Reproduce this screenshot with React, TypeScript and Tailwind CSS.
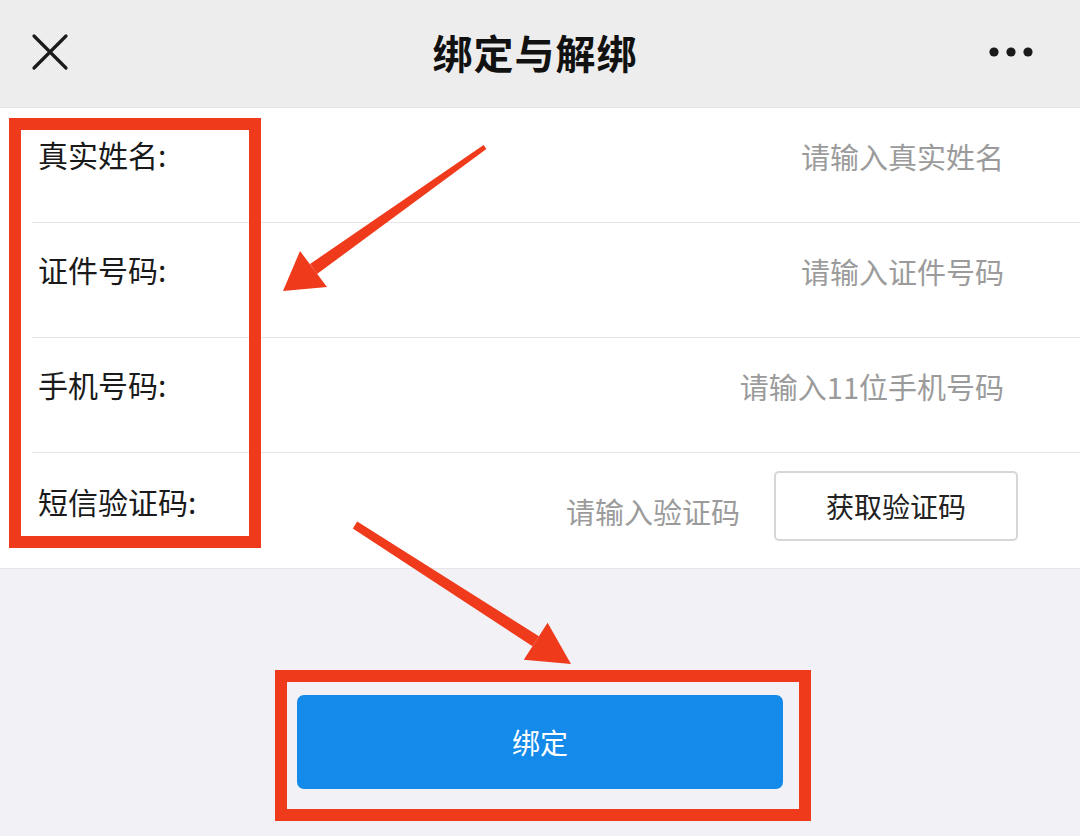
import React from 'react';

const fields = [
  { label: '真实姓名:', placeholder: '请输入真实姓名' },
  { label: '证件号码:', placeholder: '请输入证件号码' },
  { label: '手机号码:', placeholder: '请输入11位手机号码' },
];

function Header() {
  return (
    <div className="h-[108px] bg-[#ededed] flex items-center justify-between px-[30px] pb-[4px] border-b border-[#e4e4e4]">
      <svg width="40" height="40" viewBox="0 0 40 40" className="text-[#1a1a1a]">
        <path d="M4 4 L36 36 M36 4 L4 36" stroke="currentColor" strokeWidth="3.2" strokeLinecap="round" />
      </svg>
      <h1 className="text-[40px] font-bold text-[#111] tracking-[1px] ml-[13px]">绑定与解绑</h1>
      <svg width="50" height="12" viewBox="0 0 50 12" className="text-[#1a1a1a] mr-[13px]">
        <circle cx="7" cy="6" r="4.6" fill="currentColor" />
        <circle cx="24" cy="6" r="4.6" fill="currentColor" />
        <circle cx="41" cy="6" r="4.6" fill="currentColor" />
      </svg>
    </div>
  );
}

function Annotations() {
  return (
    <div className="absolute inset-0 pointer-events-none">
      <div className="absolute left-[9px] top-[118px] w-[252px] h-[430px] border-[12px] border-[#f03a1c]" />
      <div className="absolute left-[275px] top-[670px] w-[536px] h-[151px] border-[12px] border-[#f03a1c]" />
      <svg width="1080" height="836" viewBox="0 0 1080 836" className="absolute inset-0">
        {/* arrow to the labels */}
        <polygon points="483.6,145 486.4,149 317,274 310,264" fill="#f03a1c" />
        <polygon points="283,291 300,251 327,287" fill="#f03a1c" />
        {/* arrow to the button */}
        <polygon points="352.8,528.4 357.2,521.6 538.9,636.3 532.5,646.3" fill="#f03a1c" />
        <polygon points="571,664 523.8,659.8 547.6,622.8" fill="#f03a1c" />
      </svg>
    </div>
  );
}

export default function App() {
  return (
    <div
      className="relative w-[1080px] h-[836px] overflow-hidden bg-[#f1f1f6]"
      style={{ fontFamily: '"Noto Sans CJK SC", "Noto Sans", sans-serif' }}
    >
      <Header />

      <div className="bg-white border-b border-[#e6e6e6]">
        {fields.map((f) => (
          <div key={f.label} className="ml-[32px] h-[115px] flex items-center pb-[16px] pr-[76px] border-b border-[#e6e6e6]">
            <span className="w-[220px] pl-[6px] text-[30px] text-[#1a1a1a] -mt-[6px]">{f.label}</span>
            <input
              className="flex-1 min-w-0 text-right text-[29px] text-[#333] bg-transparent outline-none placeholder:text-[#9b9b9b]"
              placeholder={f.placeholder}
            />
          </div>
        ))}
        <div className="ml-[32px] h-[115px] flex items-center pb-[10px] pr-[62px]">
          <span className="w-[220px] pl-[6px] text-[30px] text-[#1a1a1a] -mt-[8px]">短信验证码:</span>
          <input
            className="flex-1 min-w-0 text-right text-[29px] text-[#333] bg-transparent outline-none placeholder:text-[#9b9b9b] pr-[34px] mt-[12px]"
            placeholder="请输入验证码"
          />
          <button className="w-[244px] h-[70px] rounded-[5px] border-[2px] border-[#d6d6d6] bg-white text-[28px] text-[#222]">
            获取验证码
          </button>
        </div>
      </div>

      <div className="flex justify-center pt-[126px]">
        <button className="w-[486px] h-[94px] rounded-[7px] bg-[#148aea] text-white text-[28px]">
          绑定
        </button>
      </div>

      <Annotations />
    </div>
  );
}
